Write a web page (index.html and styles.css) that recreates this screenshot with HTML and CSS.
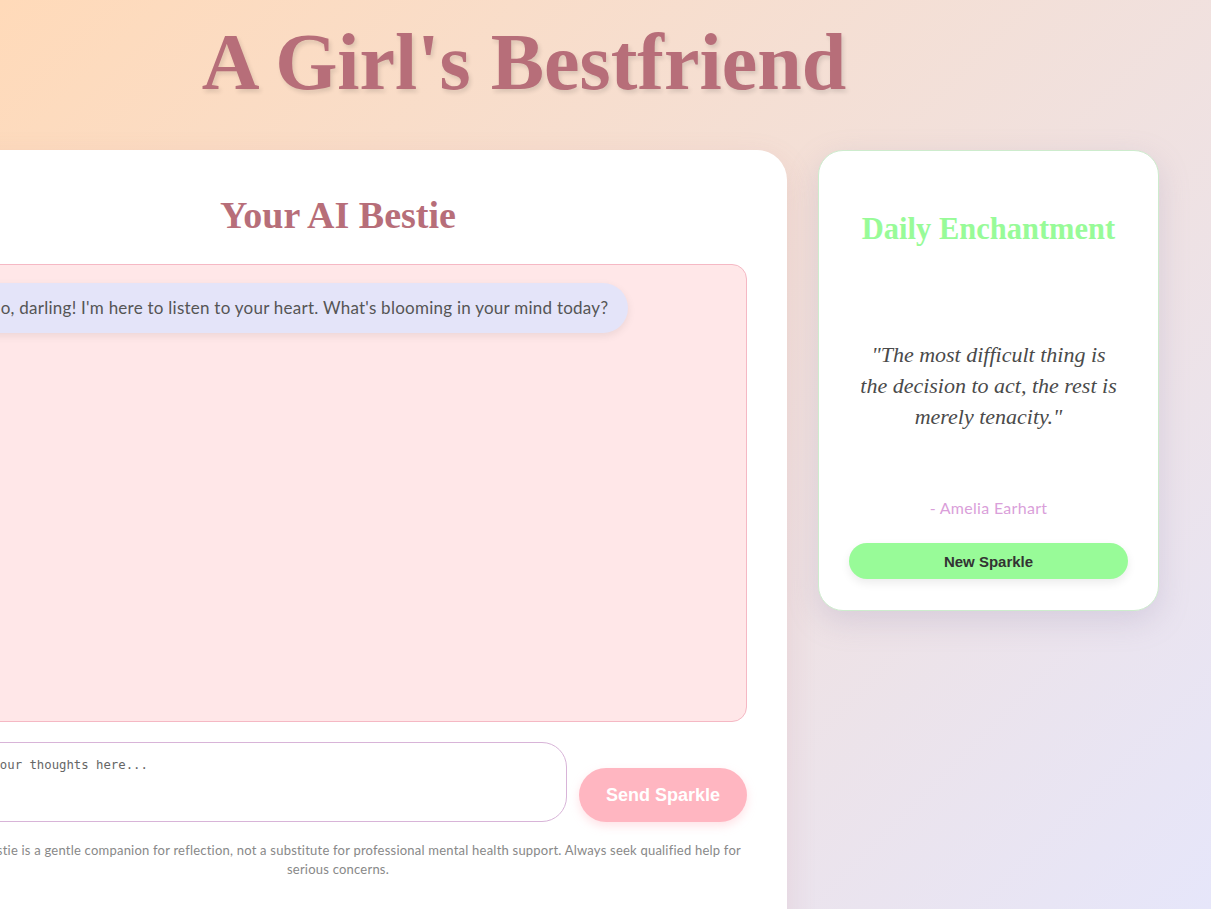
FILE: index.html
```html
<!DOCTYPE html>
<html lang="en">
<head>
<meta charset="utf-8">
<title>A Girl's Bestfriend</title>
<link rel="stylesheet" href="styles.css">
</head>
<body>
<div class="page">
  <header class="site-header">
    <h1 class="site-title">A Girl's Bestfriend</h1>
  </header>
  <main class="layout">
    <section class="chat-card">
      <h2 class="chat-title">Your AI Bestie</h2>
      <div class="chat-box">
        <div class="bubble bot">Hello, darling! I'm here to listen to your heart. What's blooming in your mind today?</div>
      </div>
      <div class="input-row">
        <textarea class="chat-input" placeholder="Share your thoughts here..."></textarea>
        <button class="send-btn">Send Sparkle</button>
      </div>
      <p class="disclaimer">Your AI Bestie is a gentle companion for reflection, not a substitute for professional mental health support. Always seek qualified help for serious concerns.</p>
    </section>
    <aside class="quote-card">
      <h2 class="quote-title">Daily Enchantment</h2>
      <p class="quote-text">"The most difficult thing is the decision to act, the rest is merely tenacity."</p>
      <p class="quote-author">- Amelia Earhart</p>
      <button class="sparkle-btn">New Sparkle</button>
    </aside>
  </main>
</div>
</body>
</html>
```
FILE: styles.css
```css
* { box-sizing: border-box; }

html, body {
  margin: 0;
  height: 100%;
}

body {
  background: linear-gradient(135deg, #ffdab9 0%, #e6e6fa 100%);
  font-family: "Lato", "Open Sans", sans-serif;
  overflow: hidden;
}

.page {
  width: 1270px;
  margin-left: -111px;
}

.site-header {
  padding-top: 12px;
  height: 150px;
}

.site-title {
  margin: 0;
  text-align: center;
  font-family: "Liberation Serif", serif;
  font-weight: 700;
  font-size: 80px;
  line-height: 100px;
  color: #b76e79;
  text-shadow: 2px 3px 4px rgba(0, 0, 0, 0.12);
}

.layout {
  display: flex;
  gap: 31px;
  align-items: flex-start;
}

.chat-card {
  width: 898px;
  height: 800px;
  background: #fff;
  border-radius: 30px;
  padding: 40px 40px;
  box-shadow: 0 10px 30px rgba(183, 110, 121, 0.15);
}

.chat-title {
  margin: 0 0 24px;
  text-align: center;
  font-family: "Liberation Serif", serif;
  font-weight: 700;
  font-size: 38px;
  line-height: 50px;
  color: #b76e79;
}

.chat-box {
  height: 458px;
  background: #ffe7e8;
  border: 1px solid #f5b8c4;
  border-radius: 15px;
  padding: 18px 20px;
}

.bubble {
  display: inline-block;
  background: #e4e4f9;
  color: #555;
  font-size: 17px;
  letter-spacing: 0.25px;
  line-height: 22px;
  padding: 14px 20px;
  border-radius: 25px;
  box-shadow: 0 3px 8px rgba(0, 0, 0, 0.08);
  white-space: nowrap;
}

.input-row {
  display: flex;
  align-items: flex-end;
  gap: 12px;
  margin-top: 20px;
}

.chat-input {
  flex: 1;
  height: 80px;
  border: 1px solid #d8b4d8;
  border-radius: 25px;
  padding: 15px 20px 14px 18px;
  font-family: "DejaVu Sans Mono", monospace;
  font-size: 12.3px;
  color: #555;
  resize: none;
  background: #fff;
}

.chat-input::placeholder {
  color: #666;
}

.send-btn {
  width: 168px;
  height: 54px;
  border: none;
  border-radius: 27px;
  background: #ffb6c1;
  color: #fff;
  font-family: "Liberation Sans", Arial, sans-serif;
  font-weight: 700;
  font-size: 18px;
  box-shadow: 0 4px 10px rgba(255, 182, 193, 0.4);
}

.disclaimer {
  margin: 19px 0 0;
  text-align: center;
  font-size: 13px;
  letter-spacing: 0.22px;
  line-height: 19px;
  color: #888;
}

.quote-card {
  width: 341px;
  height: 461px;
  background: #fff;
  border: 1px solid #cdeccd;
  border-radius: 25px;
  padding: 30px;
  text-align: center;
  box-shadow: 0 10px 30px rgba(150, 140, 180, 0.25);
}

.quote-title {
  margin: 30px 0 0;
  font-family: "Liberation Serif", serif;
  font-weight: 700;
  font-size: 30.5px;
  line-height: 36px;
  color: #98fb98;
}

.quote-text {
  margin: 92px 0 0;
  padding: 0 8px;
  font-family: "Liberation Serif", serif;
  font-style: italic;
  font-size: 22px;
  line-height: 31px;
  color: #4a4a4a;
}

.quote-author {
  margin: 64px 0 0;
  font-size: 16px;
  letter-spacing: 0.3px;
  line-height: 24px;
  color: #da9fda;
}

.sparkle-btn {
  display: block;
  width: 100%;
  height: 36px;
  margin-top: 23px;
  border: none;
  border-radius: 18px;
  background: #98fb98;
  color: #333;
  font-family: "Liberation Sans", Arial, sans-serif;
  font-weight: 700;
  font-size: 15px;
  box-shadow: 0 4px 10px rgba(0, 0, 0, 0.08);
}
```
